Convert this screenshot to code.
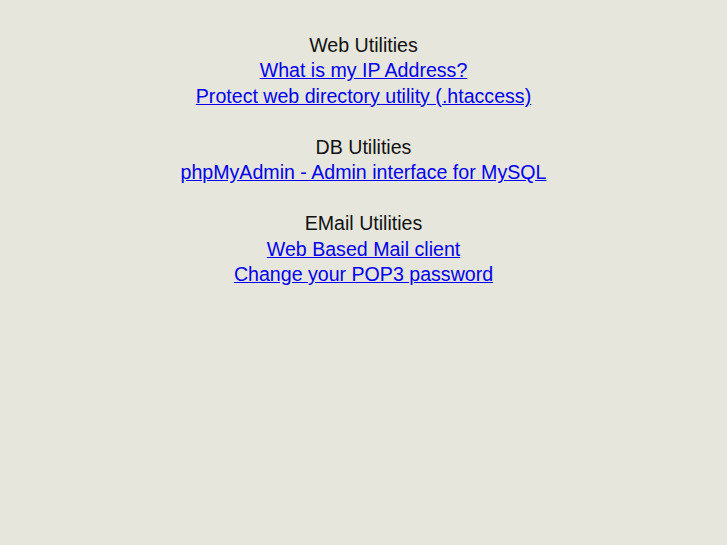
const groups = [
  {
    title: 'Web Utilities',
    links: ['What is my IP Address?', 'Protect web directory utility (.htaccess)'],
  },
  {
    title: 'DB Utilities',
    links: ['phpMyAdmin - Admin interface for MySQL'],
  },
  {
    title: 'EMail Utilities',
    links: ['Web Based Mail client', 'Change your POP3 password'],
  },
]

export default function App() {
  return (
    <div className="min-h-[545px] w-full bg-[#e6e6dc] pt-[33px] text-center font-['Liberation_Sans',Arial,sans-serif] text-[19.6px] leading-[25.45px] text-[#111]">
      {groups.map((g, i) => (
        <div key={g.title} className={i > 0 ? 'mt-[25.45px]' : ''}>
          <div>{g.title}</div>
          {g.links.map((l) => (
            <div key={l}>
              <a href="#" className="text-[#0000ee] underline">
                {l}
              </a>
            </div>
          ))}
        </div>
      ))}
    </div>
  )
}
